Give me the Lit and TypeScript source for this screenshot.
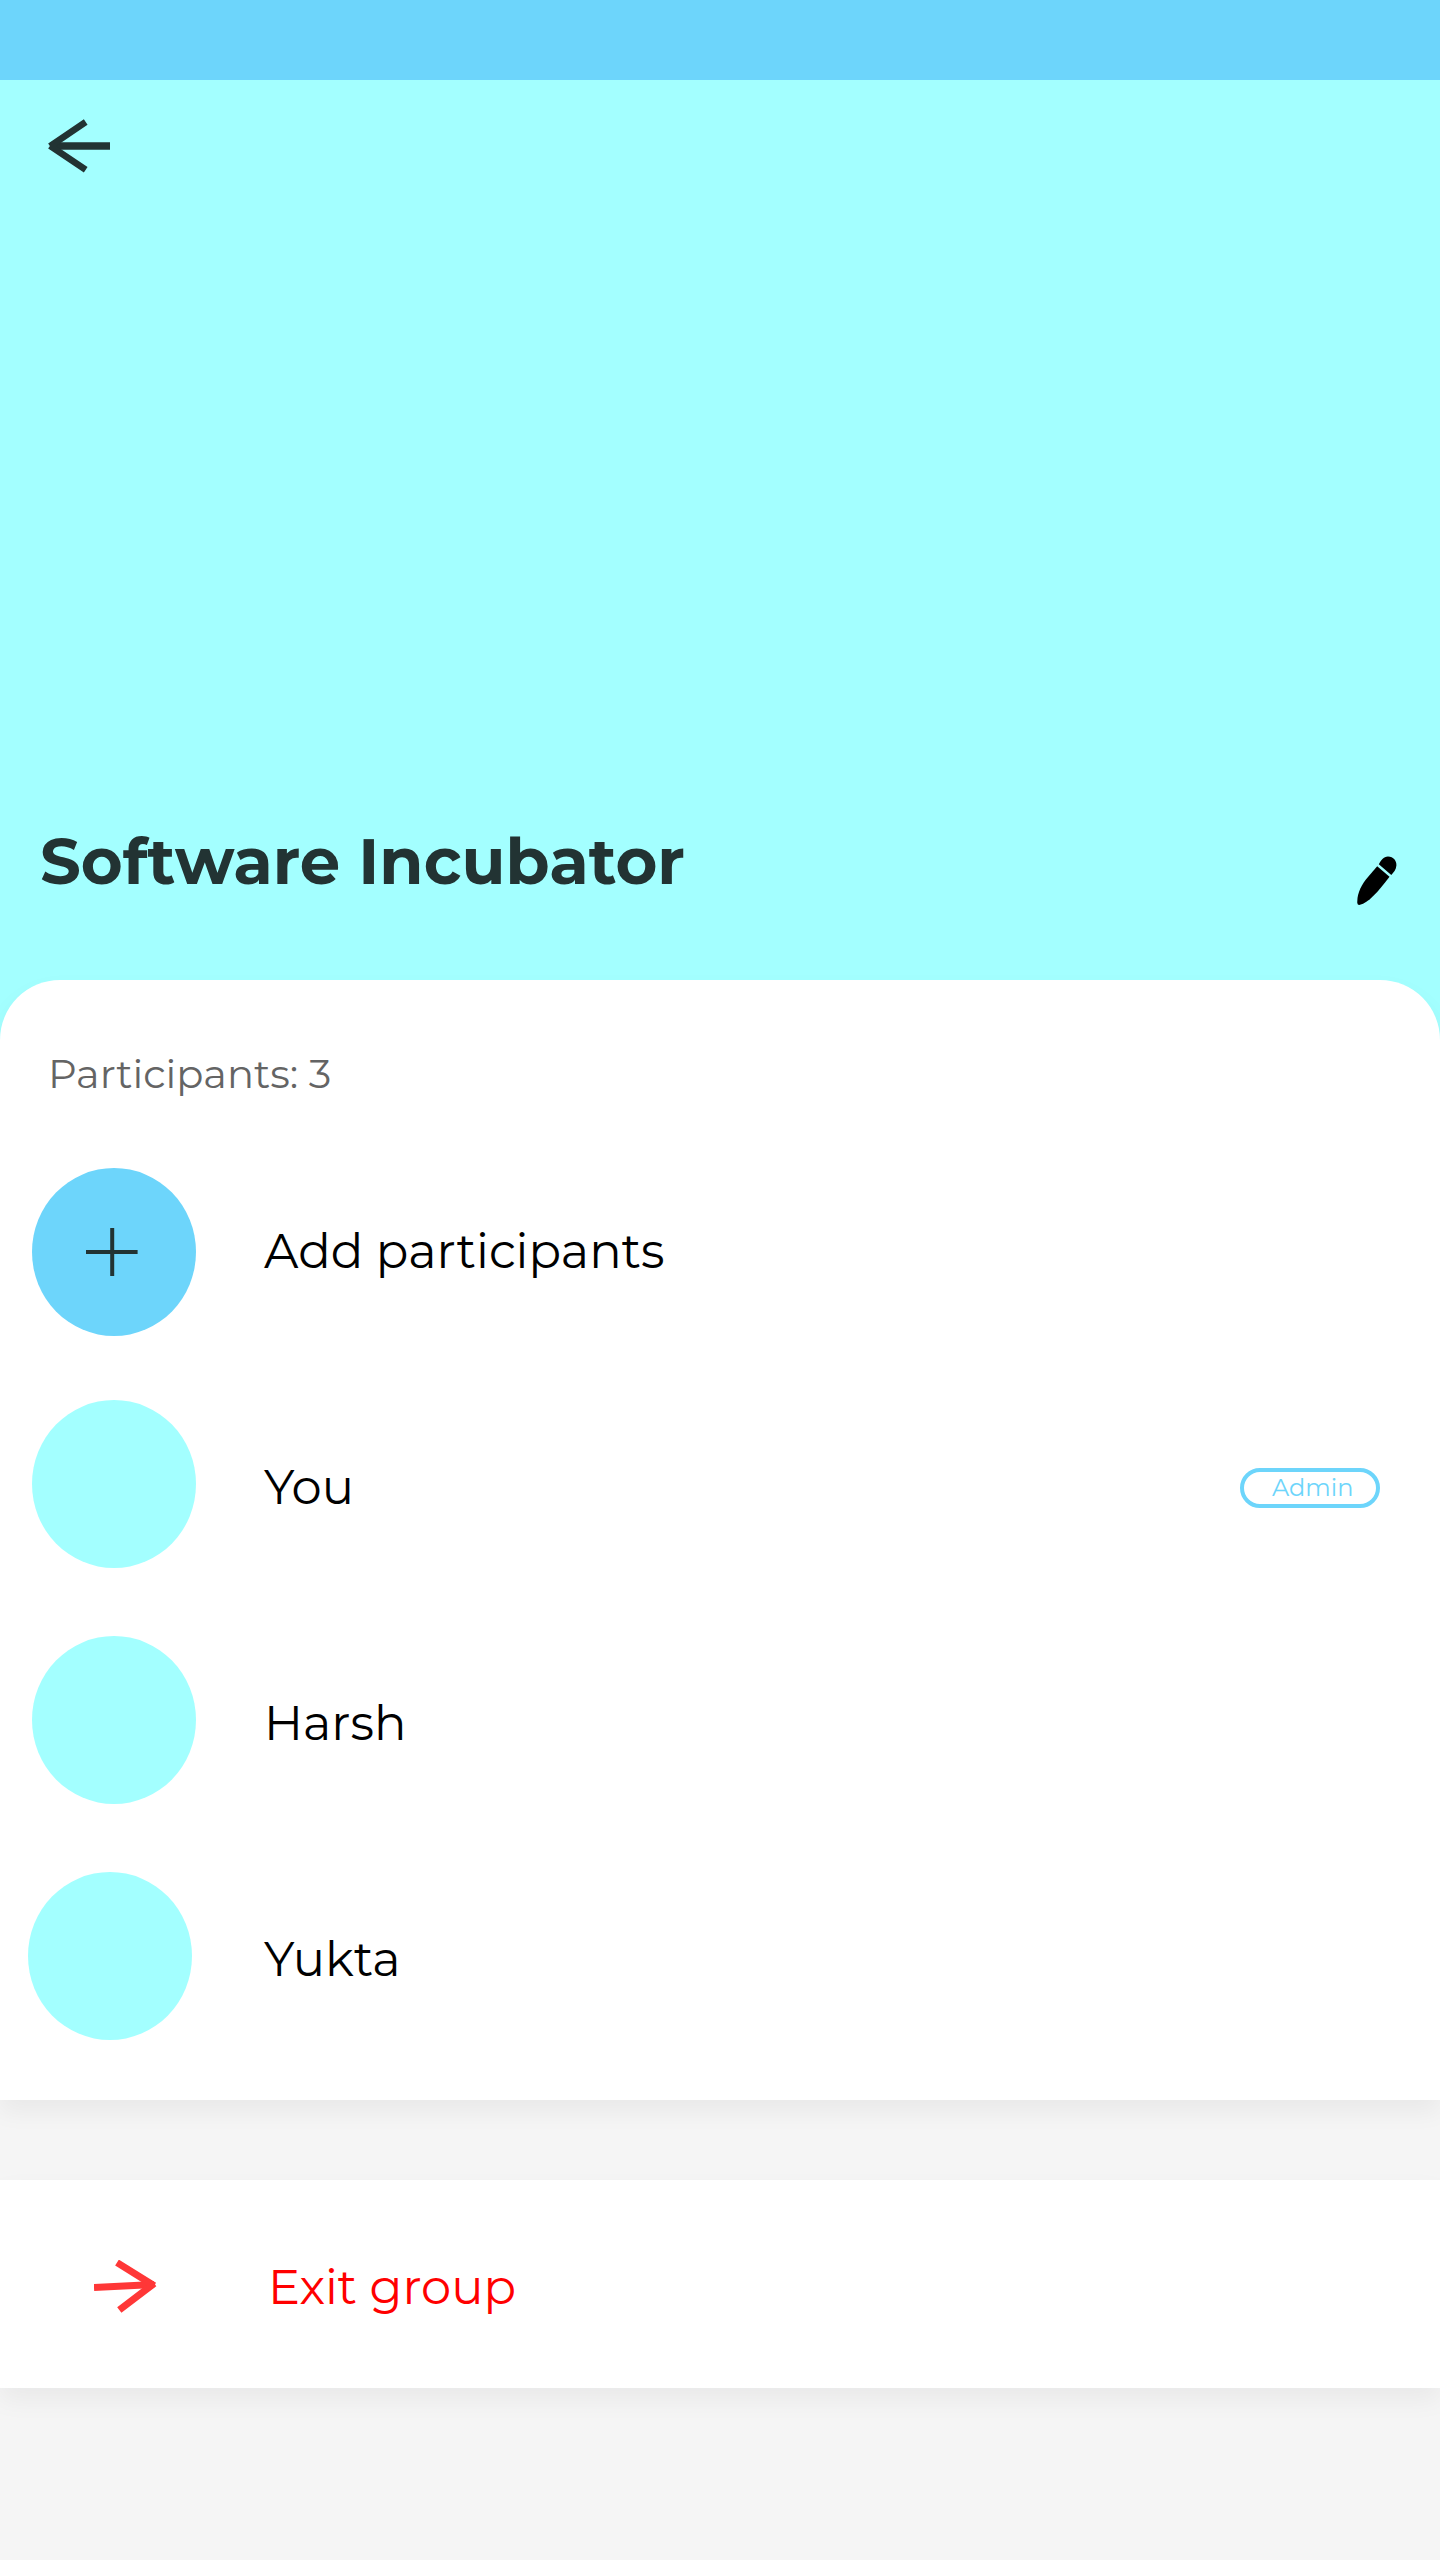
import { LitElement, html, css, svg, nothing } from "lit";
import { customElement, property } from "lit/decorators.js";

interface Participant {
  name: string;
  admin?: boolean;
  shifted?: boolean;
}

const participants: Participant[] = [
  { name: "You", admin: true },
  { name: "Harsh" },
  { name: "Yukta", shifted: true },
];

const backArrow = svg`
  <path d="M110 66H50" stroke-width="7.6" />
  <path d="M85.7 42L50 66.2M85.7 89.7L50 65.8" stroke-width="6.6" />`;

const exitArrow = svg`
  <path d="M0 27.6L60 24.6" stroke-width="7" />
  <path d="M23 2.6L60.2 25.8M25.3 50L60.2 23.4" stroke-width="7" />`;

@customElement("participant-row")
export class ParticipantRow extends LitElement {
  @property() name = "";
  @property({ type: Boolean }) admin = false;
  @property({ type: Boolean }) shifted = false;

  static styles = css`
    :host {
      display: flex;
      align-items: center;
      height: 168px;
      padding: 0 60px 0 32px;
      box-sizing: border-box;
    }
    .avatar {
      width: 164px;
      height: 168px;
      border-radius: 50%;
      background: #a3ffff;
      margin-right: 68px;
      flex: none;
    }
    .avatar.shifted {
      margin-left: -4px;
      margin-right: 72px;
    }
    .name {
      flex: 1;
      font-size: 48px;
      line-height: 56px;
      padding-top: 6px;
    }
    .badge {
      box-sizing: border-box;
      width: 140px;
      height: 40px;
      margin-top: 8px;
      border: 4px solid #6dd5fb;
      border-radius: 20px;
      color: #6dd5fb;
      font-size: 24px;
      line-height: 32px;
      padding-left: 28px;
    }
  `;

  render() {
    return html`
      <div class="avatar ${this.shifted ? "shifted" : ""}"></div>
      <div class="name">${this.name}</div>
      ${this.admin ? html`<div class="badge">Admin</div>` : nothing}
    `;
  }
}

@customElement("app-root")
export class AppRoot extends LitElement {
  static styles = css`
    :host {
      display: flex;
      flex-direction: column;
      height: 2560px;
      background: #f5f5f5;
      color: #000;
      font-family: Montserrat, Inter, sans-serif;
      font-weight: 400;
      overflow: hidden;
    }
    svg {
      display: block;
      fill: none;
      flex: none;
    }
    .status {
      height: 80px;
      background: #6dd5fb;
    }
    .hero {
      display: flex;
      flex-direction: column;
      justify-content: space-between;
      box-sizing: border-box;
      height: 1000px;
      padding-bottom: 177px;
      background: #a3ffff;
    }
    .back {
      stroke: #223333;
    }
    .heading {
      display: flex;
      align-items: flex-start;
      justify-content: space-between;
      height: 80px;
      padding: 0 41px 0 40px;
    }
    h1 {
      margin: 0;
      font-size: 64px;
      font-weight: 700;
      line-height: 76px;
      color: #223333;
    }
    .pencil {
      fill: #000;
      margin-top: 33px;
    }
    .card {
      box-sizing: border-box;
      height: 1120px;
      margin-top: -100px;
      padding-top: 70px;
      border-radius: 60px 60px 0 0;
      background: #ffffff;
      box-shadow: 0 12px 24px rgba(0, 0, 0, 0.05);
    }
    .count {
      height: 118px;
      padding-left: 48px;
      font-size: 40px;
      line-height: 48px;
      color: #646464;
    }
    .add {
      display: flex;
      align-items: center;
      height: 168px;
      padding-left: 32px;
      margin-bottom: 64px;
    }
    .add-disc {
      display: flex;
      width: 164px;
      height: 168px;
      border-radius: 50%;
      background: #6dd5fb;
      margin-right: 68px;
    }
    .plus {
      stroke: #223333;
      stroke-width: 4;
    }
    .action {
      font-size: 48px;
      line-height: 56px;
    }
    .add-label {
      padding-bottom: 2px;
    }
    .rows {
      display: flex;
      flex-direction: column;
      gap: 68px;
    }
    .exit {
      display: flex;
      align-items: center;
      box-sizing: border-box;
      height: 208px;
      margin-top: 80px;
      padding-left: 94px;
      background: #ffffff;
      box-shadow: 0 12px 24px rgba(0, 0, 0, 0.05);
      color: #ff0000;
    }
    .exit-arrow {
      stroke: #ff3737;
      margin: 8px 108px 0 0;
    }
    .exit-label {
      padding-top: 6px;
    }
  `;

  render() {
    return html`
      <div class="status"></div>
      <header class="hero">
        <svg class="back" width="160" height="120" viewBox="0 0 160 120">${backArrow}</svg>
        <div class="heading">
          <h1>Software Incubator</h1>
          <svg class="pencil" width="42" height="50" viewBox="0 0 42 50">
            <path d="M20.2 10.3L32.5 20.7C21 36 11 47 3 48.8Q0.5 49.3 0.3 47C-0.2 37 5 28 11 21Z" />
            <path d="M21.8 8.2C23.8 4.5 26.5 0.4 31 0.4C36.5 0.4 39.8 4.8 39.4 9.4C39.1 13.5 36.5 16.5 34.3 18.9Z" />
          </svg>
        </div>
      </header>
      <main class="card">
        <div class="count">Participants: ${participants.length}</div>
        <div class="add">
          <div class="add-disc">
            <svg class="plus" width="164" height="168" viewBox="0 0 164 168">
              <path d="M54 84H105.6M80.2 60V108" />
            </svg>
          </div>
          <div class="action add-label">Add participants</div>
        </div>
        <div class="rows">
          ${participants.map(
            (p) => html`<participant-row
              .name=${p.name}
              .admin=${!!p.admin}
              .shifted=${!!p.shifted}
            ></participant-row>`
          )}
        </div>
      </main>
      <section class="exit">
        <svg class="exit-arrow" width="66" height="56" viewBox="0 0 66 56">${exitArrow}</svg>
        <div class="action exit-label">Exit group</div>
      </section>
    `;
  }
}
